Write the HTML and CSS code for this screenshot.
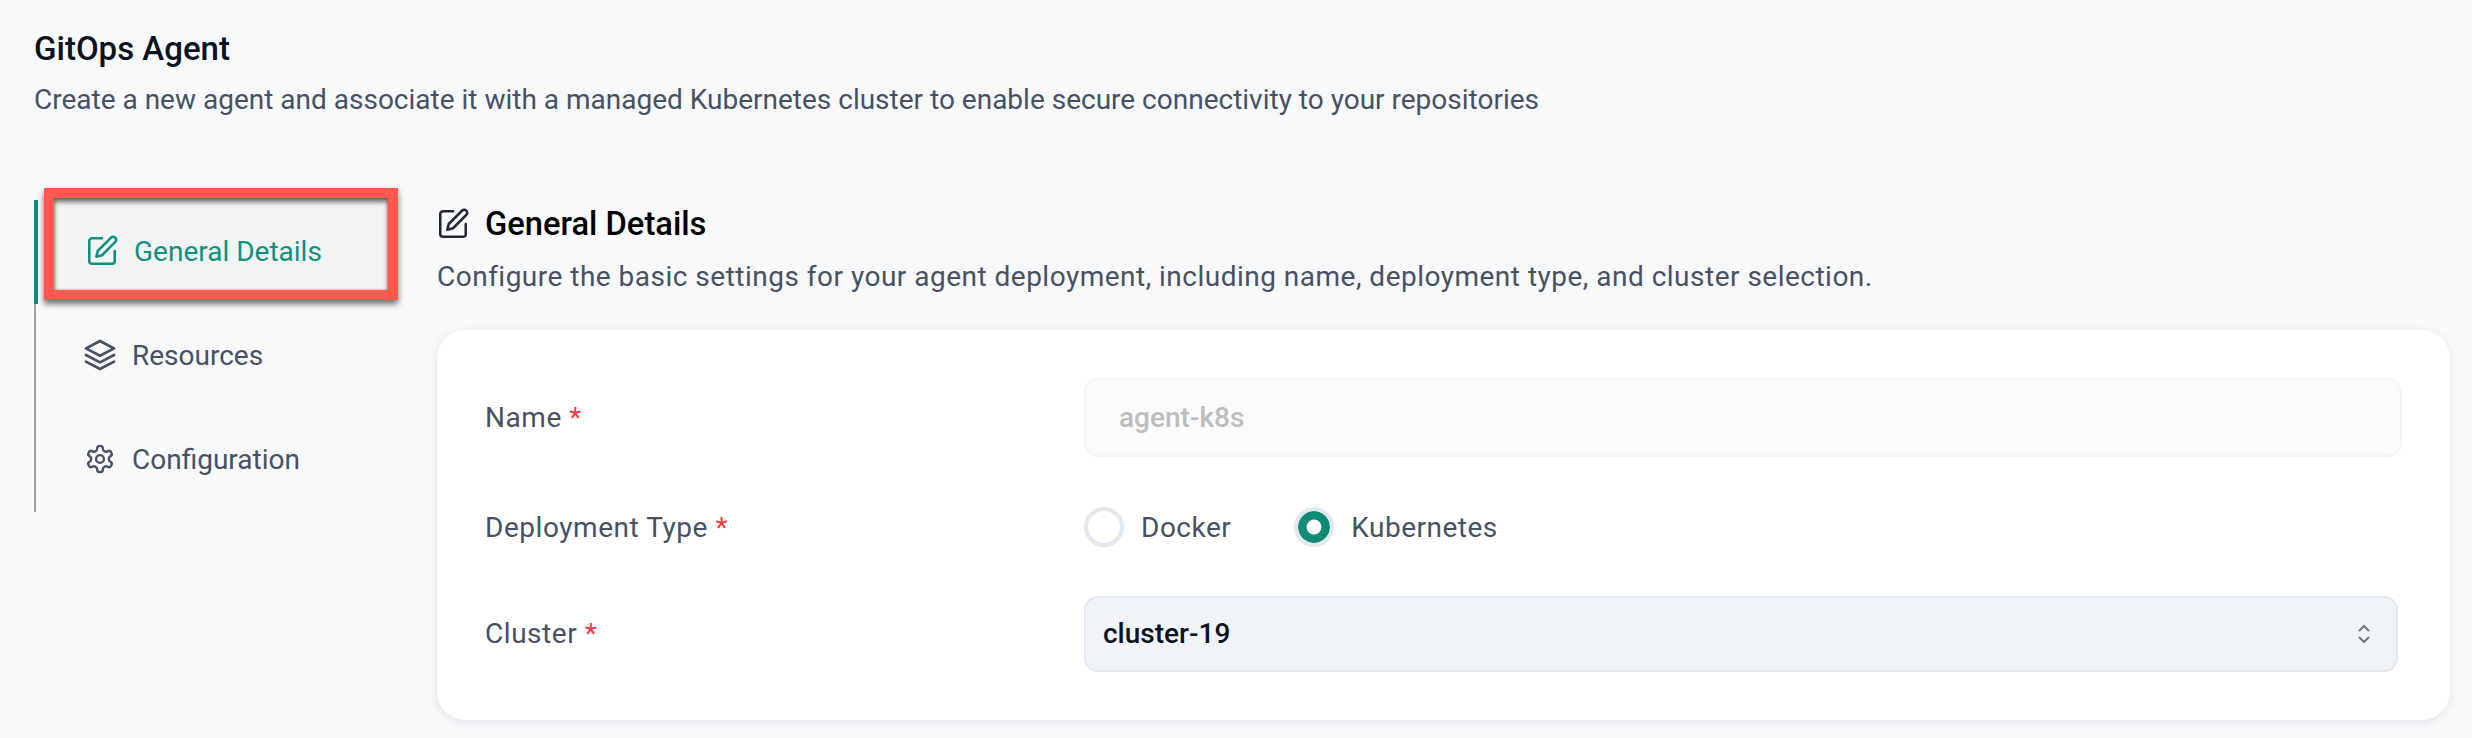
FILE: index.html
```html
<!DOCTYPE html>
<html lang="en">
<head>
  <meta charset="UTF-8" />
  <title>GitOps Agent</title>
  <link rel="stylesheet" href="styles.css">
</head>
<body>

  <header class="page-head">
    <h1>GitOps Agent</h1>
    <p>Create a new agent and associate it with a managed Kubernetes cluster to enable secure connectivity to your repositories</p>
  </header>

  <div class="layout">
    <!-- Step navigation -->
    <nav class="steps">
      <a class="step active" href="#">
        <svg class="step-icon" viewBox="0 0 24 24"><path d="M12 3H5a2 2 0 0 0-2 2v14a2 2 0 0 0 2 2h14a2 2 0 0 0 2-2v-7"/><path d="M18.4 2.6a2.1 2.1 0 1 1 3 3L12 15l-4 1 1-4Z"/></svg>
        <span>General Details</span>
        <i class="callout"></i>
      </a>
      <a class="step" href="#">
        <svg class="step-icon" viewBox="0.5 0.5 23 23"><path d="M12 2.5 2.5 7.5 12 12.5l9.5-5Z"/><path d="m2.5 12 9.5 5 9.5-5"/><path d="m2.5 16.5 9.5 5 9.5-5"/></svg>
        <span>Resources</span>
      </a>
      <a class="step" href="#">
        <svg class="step-icon" viewBox="-1 -1 26 26"><path d="M12.2 2h-.4a2 2 0 0 0-2 2v.2a2 2 0 0 1-1 1.7l-.4.3a2 2 0 0 1-2 0l-.2-.1a2 2 0 0 0-2.7.7l-.2.4a2 2 0 0 0 .7 2.7l.2.1a2 2 0 0 1 1 1.7v.5a2 2 0 0 1-1 1.8l-.2.1a2 2 0 0 0-.7 2.7l.2.4a2 2 0 0 0 2.7.7l.2-.1a2 2 0 0 1 2 0l.4.3a2 2 0 0 1 1 1.7v.2a2 2 0 0 0 2 2h.4a2 2 0 0 0 2-2v-.2a2 2 0 0 1 1-1.7l.4-.3a2 2 0 0 1 2 0l.2.1a2 2 0 0 0 2.7-.7l.2-.4a2 2 0 0 0-.7-2.7l-.2-.1a2 2 0 0 1-1-1.8v-.5a2 2 0 0 1 1-1.7l.2-.1a2 2 0 0 0 .7-2.7l-.2-.4a2 2 0 0 0-2.7-.7l-.2.1a2 2 0 0 1-2 0l-.4-.3a2 2 0 0 1-1-1.7V4a2 2 0 0 0-2-2Z"/><circle cx="12" cy="12" r="3"/></svg>
        <span>Configuration</span>
      </a>
    </nav>

    <main class="content">
      <h2 class="section-title">
        <svg class="section-icon" viewBox="0 0 24 24"><path d="M12 3H5a2 2 0 0 0-2 2v14a2 2 0 0 0 2 2h14a2 2 0 0 0 2-2v-7"/><path d="M18.4 2.6a2.1 2.1 0 1 1 3 3L12 15l-4 1 1-4Z"/></svg>
        General Details
      </h2>
      <p class="section-sub">Configure the basic settings for your agent deployment, including name, deployment type, and cluster selection.</p>

      <section class="card">
        <label class="field-label">Name <b>*</b></label>
        <div class="input-disabled">agent-k8s</div>

        <label class="field-label">Deployment Type <b>*</b></label>
        <div class="radios">
          <span class="radio-opt"><i class="radio"></i>Docker</span>
          <span class="radio-opt"><i class="radio checked"></i>Kubernetes</span>
        </div>

        <label class="field-label">Cluster <b>*</b></label>
        <div class="select">
          <span>cluster-19</span>
          <svg class="chevrons" viewBox="0 0 12 20"><path d="m1 7 5-5 5 5"/><path d="m1 13 5 5 5-5"/></svg>
        </div>
      </section>
    </main>
  </div>

</body>
</html>
```

FILE: styles.css
```css
:root {
  --bg: #f8f9fb;
  --accent: #0f8b78;
  --accent-text: #0e9480;
  --text: #475163;
  --dark: #0b1220;
  --line: #e2e8f0;
  --red: #ff5a4d;
}

* {
  margin: 0;
  padding: 0;
  box-sizing: border-box;
}

body {
  font-family: 'Roboto', sans-serif;
  background: var(--bg);
  color: var(--text);
  height: 738px;
  overflow: hidden;
  padding: 31px 22px 0 34px;
}

.page-head h1 {
  font-size: 33px;
  line-height: 36px;
  font-weight: 500;
  color: var(--dark);
}

.page-head p {
  margin-top: 15px;
  font-size: 28px;
  line-height: 36px;
}

.layout {
  display: flex;
  margin-top: 82px;
}

.steps {
  flex: 0 0 403px;
  align-self: flex-start;
  border-left: 2px solid #9aa3b2;
}

.step {
  position: relative;
  display: flex;
  align-items: center;
  gap: 15px;
  height: 104px;
  padding: 0 0 2px 47px;
  font-size: 28px;
  color: var(--text);
  text-decoration: none;
}

.step.active {
  color: var(--accent-text);
  padding-left: 49px;
}

.step.active::before {
  content: '';
  position: absolute;
  left: -2px;
  top: 0;
  bottom: 0;
  width: 4px;
  background: var(--accent);
}

.step-icon {
  width: 34px;
  height: 34px;
  fill: none;
  stroke: currentColor;
  stroke-width: 1.8;
  stroke-linecap: round;
  stroke-linejoin: round;
}

.callout {
  position: absolute;
  left: 8px;
  top: -12px;
  width: 354px;
  height: 112px;
  border: 10px solid var(--red);
  background: rgba(60, 60, 70, 0.03);
  box-shadow: 0 4px 6px rgba(0, 0, 0, 0.55), inset 0 4px 5px rgba(0, 0, 0, 0.55), inset 0 0 3px rgba(0, 0, 0, 0.3);
}

.content {
  flex: 1;
  min-width: 0;
  padding-top: 4px;
}

.section-title {
  display: flex;
  align-items: center;
  gap: 15px;
  font-size: 32.7px;
  line-height: 40px;
  font-weight: 500;
  color: #000;
  margin-left: -1px;
}

.section-icon {
  width: 34px;
  height: 34px;
  fill: none;
  stroke: #222833;
  stroke-width: 1.8;
  stroke-linecap: round;
  stroke-linejoin: round;
}

.section-sub {
  margin-top: 15px;
  font-size: 28px;
  line-height: 36px;
  letter-spacing: 0.49px;
}

.card {
  display: grid;
  grid-template-columns: 599px 1fr;
  row-gap: 50px;
  align-items: center;
  margin-top: 35px;
  padding: 48px;
  background: #fff;
  border-radius: 28px;
  box-shadow: 0 2px 8px rgba(30, 41, 59, 0.1);
}

.field-label {
  font-size: 28px;
  letter-spacing: 0.55px;
}

.field-label:nth-of-type(3) {
  padding-bottom: 2px;
}

.field-label b {
  font-weight: 400;
  color: #f5383f;
}

.input-disabled {
  height: 79px;
  display: flex;
  align-items: center;
  padding-left: 33px;
  background: #fafbfd;
  border: 2px solid #f3f5f9;
  border-radius: 14px;
  font-size: 28px;
  font-weight: 500;
  color: #bdbdbd;
}

.radios {
  display: flex;
  gap: 63px;
}

.radio-opt {
  display: flex;
  align-items: center;
  gap: 17px;
  font-size: 28px;
  letter-spacing: 0.5px;
}

.radio {
  width: 40px;
  height: 40px;
  border-radius: 50%;
  border: 4px solid var(--line);
  background: #fff;
}

.radio.checked {
  background: #fff;
  box-shadow: inset 0 0 0 8.5px var(--accent);
}

.select {
  height: 76px;
  margin: -1px 4px 0 0;
  display: flex;
  align-items: center;
  justify-content: space-between;
  padding: 0 26px 0 17px;
  background: #f0f4f9;
  border: 2px solid var(--line);
  border-radius: 14px;
  font-size: 28px;
  font-weight: 500;
  color: var(--dark);
}

.select span {
  padding-bottom: 2px;
}

.chevrons {
  width: 12px;
  height: 20px;
  fill: none;
  stroke: #71757e;
  stroke-width: 2;
}
```
